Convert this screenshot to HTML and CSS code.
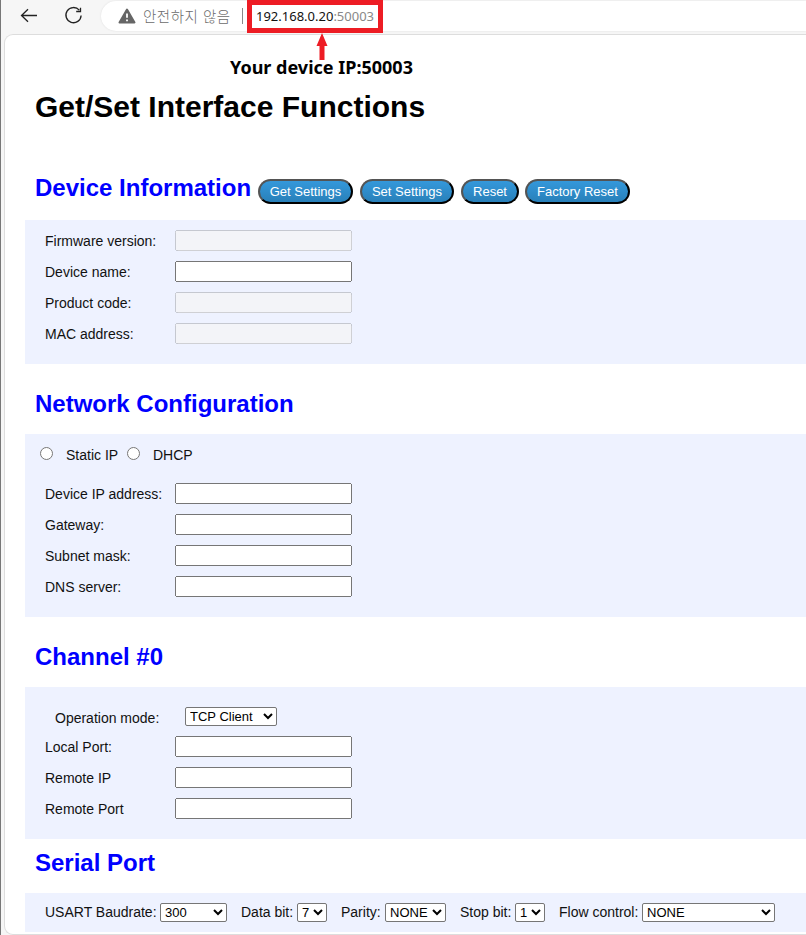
FILE: index.html
```html
<!DOCTYPE html>
<html lang="en">
<head>
<meta charset="utf-8">
<title>Get/Set Interface Functions</title>
<link rel="stylesheet" href="styles.css">
</head>
<body>
<div class="window">
  <header class="toolbar">
    <svg class="back" width="20" height="20" viewBox="0 0 20 20"><path d="M18 9.500H2.800M9 3.200L2.500 9.500L9 15.800"/></svg>
    <svg class="reload" width="20" height="20" viewBox="0 0 20 20"><path d="M15.300 4.200A7.600 7.600 0 1 0 17.100 9.500M16.500 1.700V5.500H12.200"/></svg>
    <div class="address">
      <svg class="warning" width="18" height="16" viewBox="0 0 18 16"><path class="tri" d="M9 1.500L16.500 14.500H1.500Z"/><path class="bang" d="M9 5.500V9.800M9 11.400V13.200"/></svg>
      <span class="insecure" lang="ko">안전하지 않음</span>
      <span class="divider"></span>
      <div class="url"><span class="host">192.168.0.20</span><span class="port">:50003</span>
        <div class="callout">
          <svg width="12" height="27" viewBox="0 0 12 27"><path d="M6 0L11.500 13H8.500V27H3.500V13H.5Z"/></svg>
          <span class="callout-text">Your device IP:50003</span>
        </div>
      </div>
    </div>
  </header>
  <main class="page">
    <h1>Get/Set Interface Functions</h1>
    <div class="heading device-heading">
      <h2>Device Information</h2>
      <button class="b-get">Get Settings</button><button class="b-set">Set Settings</button><button class="b-reset">Reset</button><button class="b-factory">Factory Reset</button>
    </div>
    <section class="panel device">
      <div class="row"><label>Firmware version:</label><input type="text" disabled></div>
      <div class="row"><label>Device name:</label><input type="text"></div>
      <div class="row"><label>Product code:</label><input type="text" disabled></div>
      <div class="row"><label>MAC address:</label><input type="text" disabled></div>
    </section>
    <div class="heading"><h2>Network Configuration</h2></div>
    <section class="panel network">
      <div class="radios"><input type="radio" name="ip"><label class="static">Static IP</label><input type="radio" name="ip"><label>DHCP</label></div>
      <div class="row"><label>Device IP address:</label><input type="text"></div>
      <div class="row"><label>Gateway:</label><input type="text"></div>
      <div class="row"><label>Subnet mask:</label><input type="text"></div>
      <div class="row"><label>DNS server:</label><input type="text"></div>
    </section>
    <div class="heading"><h2>Channel #0</h2></div>
    <section class="panel channel">
      <div class="row mode"><label>Operation mode:</label><select><option>TCP Client</option></select></div>
      <div class="row"><label>Local Port:</label><input type="text"></div>
      <div class="row"><label>Remote IP</label><input type="text"></div>
      <div class="row"><label>Remote Port</label><input type="text"></div>
    </section>
    <div class="heading serial-heading"><h2>Serial Port</h2></div>
    <section class="panel serial">
      <div class="field f-baud"><label>USART Baudrate:</label><select><option>300</option></select></div>
      <div class="field f-data"><label>Data bit:</label><select><option>7</option></select></div>
      <div class="field f-parity"><label>Parity:</label><select><option>NONE</option></select></div>
      <div class="field f-stop"><label>Stop bit:</label><select><option>1</option></select></div>
      <div class="field f-flow"><label>Flow control:</label><select><option>NONE</option></select></div>
    </section>
  </main>
</div>
</body>
</html>
```

FILE: styles.css
```css
* { box-sizing: border-box; }
body { margin: 0; overflow: hidden; font-family: "Liberation Sans", Arial, sans-serif; }
.window { height: 935px; border-left: 1px solid #777; background: #f6f6f6; padding-left: 3px; }

.toolbar { height: 34px; display: flex; align-items: flex-start; padding-left: 15px; }
.toolbar svg { flex: none; }
.back, .reload { margin-top: 6px; fill: none; stroke: #222; stroke-width: 1.3; }
.reload { margin-left: 25px; }
.address {
  display: flex; align-items: center; flex: 1; height: 30px; margin: 1px 0 0 17px; padding-left: 17px;
  background: #fff; border-radius: 15px 0 0 15px; box-shadow: 0 0 2px #ddd;
  font-family: "Noto Sans", "Noto Sans CJK KR", sans-serif; font-size: 14px; white-space: nowrap;
}
.tri { fill: #666; stroke: #666; stroke-width: 2; stroke-linejoin: round; }
.bang { stroke: #fff; stroke-width: 1.8; }
.insecure { width: 88px; margin: -2px 0 0 7px; color: #6b6b6b; font-family: "Noto Sans CJK KR", sans-serif; font-size: 14.5px; letter-spacing: .5px; font-weight: 300; }
.divider { width: 1px; height: 16px; margin-left: 11px; background: #888; }
.url {
  position: relative; display: flex; align-items: center; width: 136px; height: 33px; flex: none;
  margin-left: 4px; padding-left: 4px; border: 5px solid #ed1c24; background: #fff; font-size: 13px;
}
.host { color: #111; }
.port { color: #888; }
.callout { position: absolute; top: 28px; left: -23px; width: 185px; display: flex; flex-direction: column; align-items: center; }
.callout svg { fill: #ed1c24; }
.callout-text { margin-top: -5px; font: bold 18px/24px "Noto Sans", sans-serif; color: #000; }

.page {
  height: 901px; padding-left: 20px; background: #fff;
  border: 1px solid #ddd; border-right: 0; border-radius: 9px 0 0 9px; overflow: hidden;
}
h1, h2 { margin: 0; white-space: nowrap; }
h1 { height: 121px; padding: 54px 0 0 10px; font-size: 30px; line-height: 36px; color: #000; }
h2 { font-size: 24px; line-height: 28px; color: #00f; }
.heading { height: 70px; padding: 26px 0 0 10px; }
.device-heading { display: flex; height: 64px; padding-top: 18px; }
.device-heading h2 { width: 223px; flex: none; }
.serial-heading { height: 54px; padding-top: 10px; }
button {
  height: 25px; margin: 5px 7px 0 0; padding: 0; border: 2px outset #000; border-radius: 13px;
  background: linear-gradient(#3498db, #2980b9); color: #fff; font: 13px "Liberation Sans", sans-serif;
}
.b-get { width: 95px; }
.b-set { width: 94px; }
.b-reset { width: 58px; margin-right: 6px; }
.b-factory { width: 105px; }

.panel { background: #eef2ff; padding: 10px 0 0 20px; font-size: 14px; color: #111; }
.device { height: 144px; }
.network { height: 183px; }
.channel { height: 152px; padding-top: 20px; }
.row { display: flex; height: 21px; margin-bottom: 10px; }
.row label { width: 130px; flex: none; line-height: 22px; }
.row input { width: 177px; height: 21px; margin: 0; }
.radios { display: flex; height: 39px; margin-left: -5px; }
.radios label { line-height: 22px; }
.radios input { width: 13px; height: 13px; margin: 3px 13px 0 0; }
.radios .static { width: 61px; }
.mode { height: 19px; padding-left: 10px; }
select { height: 19px; margin: 0; padding: 0; font: 13px "Liberation Sans", sans-serif; color: #000; background: #fff; border: 1px solid #767676; border-radius: 2px; }
.mode select { width: 92px; }
.serial { display: flex; height: 39px; }
.field { display: flex; white-space: nowrap; }
.field label { line-height: 19px; }
.f-baud { width: 196px; } .f-baud label { width: 115px; } .f-baud select { width: 67px; }
.f-data { width: 100px; } .f-data label { width: 56px; } .f-data select { width: 30px; }
.f-parity { width: 119px; } .f-parity label { width: 44px; } .f-parity select { width: 61px; }
.f-stop { width: 99px; } .f-stop label { width: 55px; } .f-stop select { width: 30px; }
.f-flow label { width: 83px; } .f-flow select { width: 133px; }
```
